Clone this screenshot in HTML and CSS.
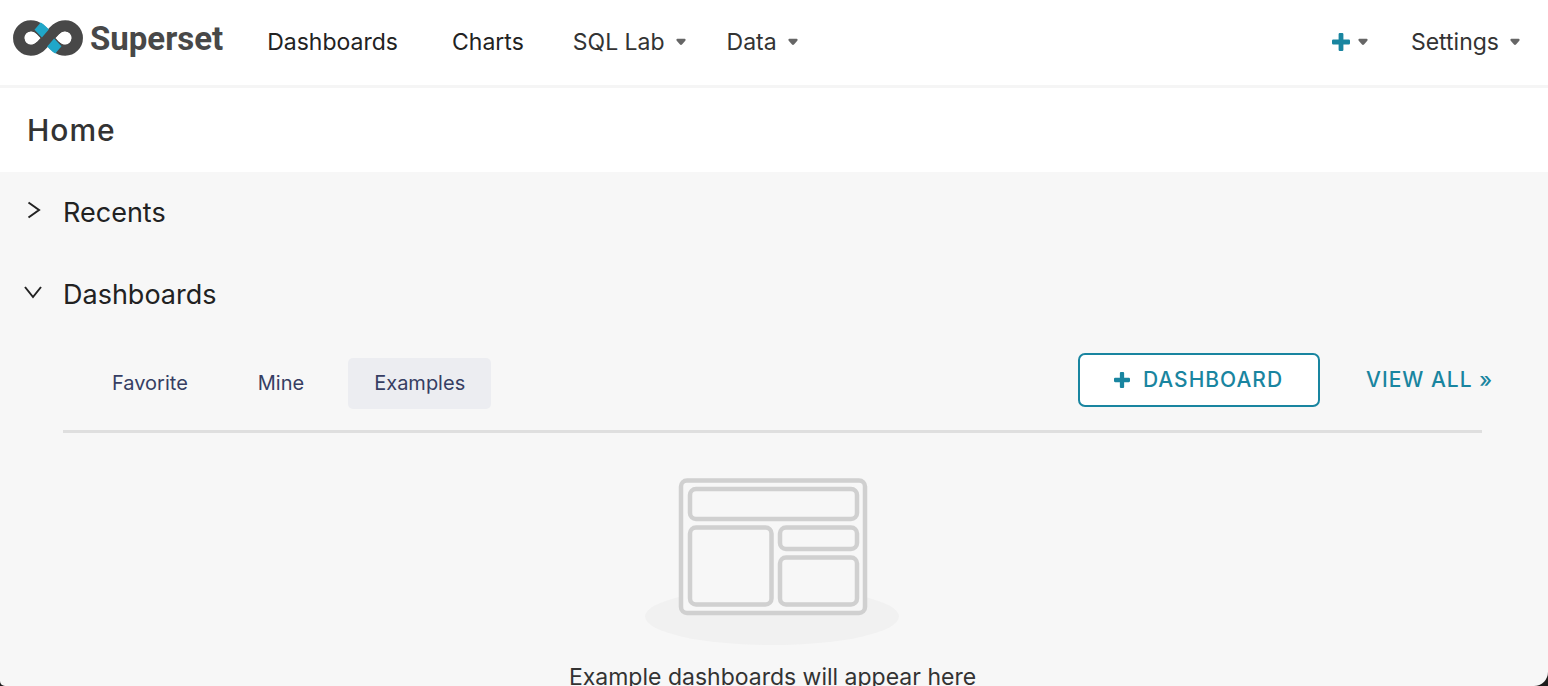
FILE: index.html
```
<!DOCTYPE html>
<html lang="en">
<head>
<meta charset="utf-8">
<meta name="viewport" content="width=device-width, initial-scale=1">
<title>Superset</title>
<link rel="stylesheet" href="styles.css">
</head>
<body>
<svg class="sprite" aria-hidden="true">
  <symbol id="caret" viewBox="0 0 10 8"><path d="M1.300.800h7.400c.900 0 1.200 1.100.600 1.900L6.200 6.300q-1.200 1.200-2.400 0L.700 2.700C.100 1.900.400.800 1.300.800z"/></symbol>
  <symbol id="plus" viewBox="0 0 18 18"><path d="M7.800 0h2.400q1.200 0 1.200 1.200v5.400h5.400q1.200 0 1.200 1.200v2.400q0 1.200-1.200 1.200h-5.400v5.400q0 1.200-1.200 1.200H7.800q-1.200 0-1.200-1.200v-5.400H1.200Q0 11.400 0 10.200V7.800q0-1.200 1.200-1.200h5.400V1.200Q6.600 0 7.800 0z"/></symbol>
</svg>
<div class="window">
  <header class="navbar">
    <a class="brand" href="#">
      <svg class="brand-mark" viewBox="0 0 70 36" aria-hidden="true">
        <path fill="none" stroke="#484848" stroke-width="11.500" d="M35 18C29.500 11.500 25.500 6 17.800 6a12 12 0 0 0 0 24C25.500 30 29.500 24.500 35 18S44.500 6 52.200 6a12 12 0 0 1 0 24C44.500 30 40.500 24.500 35 18z"/>
        <path fill="#20a7c9" d="M27.700 2.500 21.500 9.700 28.900 17.400 35.800 9.500C33 6.400 30.500 4.100 27.700 2.500zM42.300 33.500 48.500 26.300 41.100 18.600 34.200 26.500C37 29.600 39.500 31.900 42.300 33.500z"/>
        <path fill="#fff" d="M26.700 18C23.800 14.200 21.500 11.400 18.300 11.400a6.600 6.600 0 0 0 0 13.200C21.500 24.600 23.800 21.800 26.700 18zM43.300 18C46.200 21.800 48.500 24.600 51.700 24.600a6.600 6.600 0 0 0 0-13.200C48.500 11.400 46.200 14.200 43.300 18z"/>
      </svg>
      <span class="brand-name">Superset</span>
    </a>
    <nav class="menu">
      <a class="menu-item menu-link" href="#">Dashboards</a>
      <a class="menu-item menu-link" href="#">Charts</a>
      <button class="menu-item" type="button">SQL Lab<svg class="caret"><use href="#caret"/></svg></button>
      <button class="menu-item" type="button">Data<svg class="caret"><use href="#caret"/></svg></button>
    </nav>
    <div class="tools">
      <button class="menu-item add" type="button" aria-label="Add new"><svg class="plus"><use href="#plus"/></svg><svg class="caret"><use href="#caret"/></svg></button>
      <button class="menu-item" type="button">Settings<svg class="caret"><use href="#caret"/></svg></button>
    </div>
  </header>
  <div class="page-title"><h1>Home</h1></div>
  <main>
    <button class="section-head" type="button" aria-expanded="false">
      <svg class="chevron" viewBox="0 0 18 18"><path d="M4.500 1.500 15 9 4.500 16.500"/></svg>Recents
    </button>
    <button class="section-head" type="button" aria-expanded="true">
      <svg class="chevron" viewBox="0 0 18 18"><path d="M1 4 9 14 17 4"/></svg>Dashboards
    </button>
    <section class="panel">
      <div class="toolbar">
        <div class="tabs" role="tablist">
          <button class="tab" type="button" role="tab" aria-selected="false">Favorite</button>
          <button class="tab" type="button" role="tab" aria-selected="false">Mine</button>
          <button class="tab active" type="button" role="tab" aria-selected="true">Examples</button>
        </div>
        <div class="actions">
          <button class="action outlined" type="button"><svg class="plus small"><use href="#plus"/></svg>Dashboard</button>
          <a class="action" href="#">View all »</a>
        </div>
      </div>
      <div class="empty">
        <svg class="empty-art" viewBox="0 0 256 168" aria-hidden="true">
          <ellipse cx="127" cy="138.500" rx="127" ry="28.500" fill="#f1f1f1"/>
          <g fill="#f7f7f7" stroke="#d0d0d0" stroke-width="4.500">
            <rect x="36" y="2.500" width="184" height="132.500" rx="6"/>
            <rect x="45" y="11" width="167" height="30" rx="6"/>
            <rect x="45" y="49.500" width="81.500" height="77" rx="6"/>
            <rect x="135" y="49.500" width="77" height="21.500" rx="6"/>
            <rect x="135" y="79.500" width="77" height="47" rx="6"/>
          </g>
        </svg>
        <p>Example dashboards will appear here</p>
      </div>
    </section>
  </main>
</div>
</body>
</html>
```
FILE: styles.css
```
* { box-sizing: border-box; }

body {
  margin: 0;
  background: #1c1c1c;
  color: #222;
  font-family: Inter, "Liberation Sans", sans-serif;
}

button {
  padding: 0;
  border: 0;
  background: none;
  color: inherit;
  font: inherit;
  cursor: pointer;
}

a { color: inherit; text-decoration: none; }

.sprite { display: none; }

.window {
  display: flex;
  flex-direction: column;
  height: 100vh;
  overflow: hidden;
  border-radius: 0 0 14px 5px;
  background: #f7f7f7;
}

.navbar {
  display: flex;
  flex: none;
  align-items: center;
  height: 88px;
  padding: 0 28px 2px 13px;
  border-bottom: 3px solid #f5f5f5;
  background: #fff;
}

.brand {
  display: flex;
  align-items: center;
  gap: 7px;
  height: 36px;
  margin: 0 44px 8px 0;
}

.brand-mark { width: 70px; height: 36px; }

.brand-name {
  padding-top: 2px;
  color: #484848;
  font: 700 33px/40px Roboto, sans-serif;
}

.menu, .tools { display: flex; align-items: center; }
.menu { gap: 41px; }
.tools { gap: 43px; margin-left: auto; }

.menu-item {
  display: flex;
  align-items: center;
  gap: 11px;
  color: #333;
  font-size: 23px;
  line-height: 32px;
}

.menu-link { margin-right: 8px; color: #222; }
.menu-link:first-child { margin-right: 13px; }

.caret { width: 10px; height: 8px; fill: #666; }
.add { gap: 8px; }
.plus { width: 18px; height: 18px; fill: #1985a0; }
.plus.small { width: 16px; height: 16px; }

.page-title {
  flex: none;
  padding: 22px 27px;
  background: #fff;
}

h1 {
  margin: 0;
  color: #333;
  font-size: 30px;
  font-weight: 500;
  line-height: 40px;
  letter-spacing: 1px;
}

.section-head {
  display: flex;
  align-items: center;
  gap: 21px;
  width: 100%;
  height: 82px;
  padding: 0 24px;
  font-size: 27px;
  line-height: 36px;
  text-align: left;
}

.chevron {
  width: 18px;
  height: 18px;
  margin-bottom: 6px;
  fill: none;
  stroke: #222;
  stroke-width: 2;
}

.panel { padding: 0 66px 0 63px; }

.toolbar {
  display: flex;
  align-items: center;
  justify-content: space-between;
  height: 97px;
  border-bottom: 3px solid #dfdfdf;
}

.tabs { display: flex; gap: 18px; margin-left: 23px; }

.tab {
  padding: 11px 26px;
  border-radius: 5px;
  color: #363e63;
  font-size: 20px;
  line-height: 29px;
}

.tab.active { background: #ecedf1; }

.actions {
  display: flex;
  align-items: center;
  gap: 46px;
  margin-right: -11px;
  padding-bottom: 6px;
}

.action {
  display: flex;
  align-items: center;
  gap: 13px;
  color: #1985a0;
  font-size: 21px;
  font-weight: 500;
  line-height: 28px;
  letter-spacing: 1px;
  text-transform: uppercase;
}

.outlined {
  padding: 11px 35px 11px 34px;
  border: 2px solid #1985a0;
  border-radius: 7px;
  background: #fff;
}

.empty {
  display: flex;
  flex-direction: column;
  align-items: center;
  padding-top: 45px;
}

.empty-art { width: 256px; height: 168px; }

.empty p {
  margin: 15px 0;
  color: #333;
  font-size: 23px;
  line-height: 32px;
}
```
